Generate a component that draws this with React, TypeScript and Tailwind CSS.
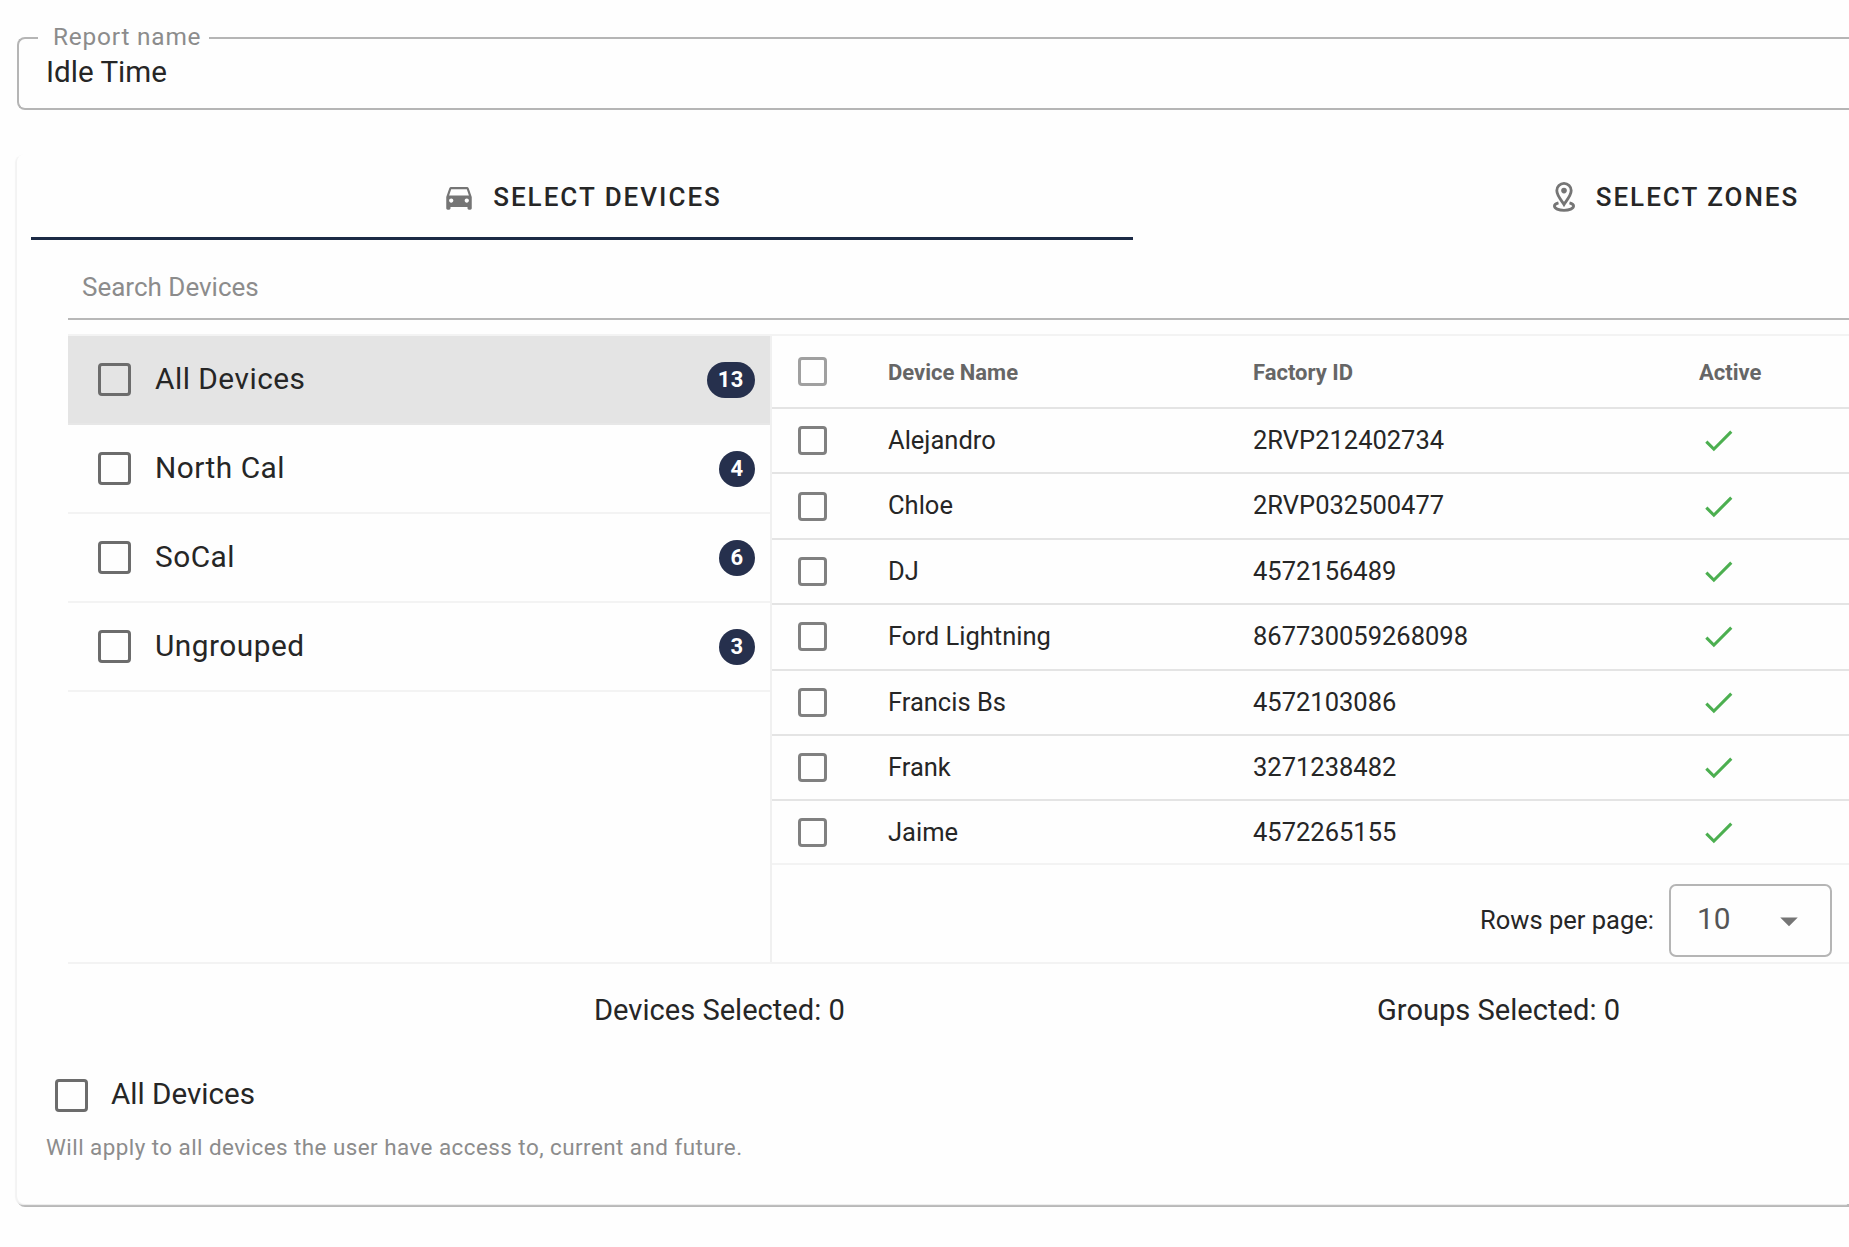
import { MdArrowDropDown, MdCheck, MdDirectionsCar } from 'react-icons/md'
import clsx from 'clsx'

const groups = [
  { name: 'All Devices', count: 13 },
  { name: 'North Cal', count: 4 },
  { name: 'SoCal', count: 6 },
  { name: 'Ungrouped', count: 3 },
]

const devices = [
  { name: 'Alejandro', factoryId: '2RVP212402734' },
  { name: 'Chloe', factoryId: '2RVP032500477' },
  { name: 'DJ', factoryId: '4572156489' },
  { name: 'Ford Lightning', factoryId: '867730059268098' },
  { name: 'Francis Bs', factoryId: '4572103086' },
  { name: 'Frank', factoryId: '3271238482' },
  { name: 'Jaime', factoryId: '4572265155' },
]

const Checkbox = ({ className }: { className: string }) => (
  <span className={clsx('block shrink-0 rounded-[4px] border-3', className)} />
)

const ZoneIcon = () => (
  <svg width="22" height="30" viewBox="0 0 22 30" fill="none" stroke="#757575" strokeWidth="2.8">
    <path d="M11 22.5C8.5 18.5 3.8 13.6 3.8 8.6a7.2 7.2 0 0 1 14.4 0c0 5-4.7 9.9-7.2 13.9z" />
    <circle cx="11" cy="8.6" r="2.8" fill="#757575" stroke="none" />
    <path d="M5.5 20.8C2.8 21.5 1.4 22.7 1.4 24.1c0 2.4 4.3 4.2 9.6 4.2s9.6-1.8 9.6-4.2c0-1.4-1.4-2.6-4.1-3.3" />
  </svg>
)

const ReportNameField = () => (
  <fieldset className="ml-[17px] h-[82px] rounded-l-[8px] border-2 border-r-0 border-[#b5b5b5] pl-[19px]">
    <legend className="h-[20px] pl-[15px] pr-[8px] text-[24.4px] leading-[18px] tracking-[0.8px] text-[#8c8c8c]">
      Report name
    </legend>
    <div className="pl-[8px] pt-[6px] text-[29.6px] leading-[36px]">Idle Time</div>
  </fieldset>
)

const Tabs = () => (
  <div className="ml-[14px] flex h-[86px] text-[26px] font-medium tracking-[2px]">
    <div className="flex w-[1102px] shrink-0 items-center justify-center gap-[17px] border-b-3 border-[#1c2a45] pt-[3px]">
      <MdDirectionsCar size={34} color="#757575" className="mb-px" />
      SELECT DEVICES
    </div>
    <div className="flex w-[1086px] shrink-0 items-center justify-center gap-[21px] border-b-3 border-transparent pt-[3px]">
      <ZoneIcon />
      SELECT ZONES
    </div>
  </div>
)

const GroupList = () => (
  <div className="w-[704px] shrink-0 border-r-2 border-[#f0f0f0]">
    {groups.map((group, i) => (
      <div
        key={group.name}
        className={clsx(
          'flex h-[89px] items-center border-b-2 pl-[30px] pr-[15px]',
          i === 0 ? 'border-[#e7e7e7] bg-[#e4e4e4]' : 'border-[#f3f3f3]',
        )}
      >
        <Checkbox className="size-[33px] border-[#6c6c6c]" />
        <span className="ml-[24px] flex-1 pb-[2px] text-[29.8px] leading-[36px] tracking-[0.5px]">
          {group.name}
        </span>
        <span className="flex h-9 min-w-9 items-center justify-center rounded-full bg-[#26304d] px-[11px] text-[22px] font-bold tracking-[0.5px] text-white">
          {group.count}
        </span>
      </div>
    ))}
  </div>
)

const DeviceTable = () => (
  <div>
    <div className="flex h-[73px] items-center border-b-2 border-[#e4e4e4] text-[22px] font-bold text-[#666]">
      <Checkbox className="ml-[26px] size-[29px] border-[#a0a0a0]" />
      <span className="ml-[61px] w-[365px] pt-px">Device Name</span>
      <span className="w-[446px] pt-px">Factory ID</span>
      <span className="pt-px">Active</span>
    </div>
    {devices.map((device) => (
      <div
        key={device.name}
        className="flex h-[65.4px] items-center border-b-2 border-[#e4e4e4] text-[25.5px] last:h-[64px] last:border-[#f3f3f3]"
      >
        <Checkbox className="ml-[26px] size-[29px] border-[#808080]" />
        <span className="ml-[61px] w-[365px] pb-px">{device.name}</span>
        <span className="w-[447px] pb-px">{device.factoryId}</span>
        <MdCheck size={37} color="#4caf50" />
      </div>
    ))}
  </div>
)

const Pagination = () => (
  <div className="flex flex-1 items-center justify-end pr-[17px] pt-[14px]">
    <span className="pb-[2px] text-[25.5px]">Rows per page:</span>
    <div className="ml-[15px] flex h-[73px] w-[163px] items-center justify-between rounded-[7px] border-2 border-[#b5b5b5] pl-[26px] pr-[20px] text-[29.8px] text-[#555]">
      <span className="pb-[2px]">10</span>
      <MdArrowDropDown size={42} color="#757575" />
    </div>
  </div>
)

const App = () => {
  return (
    <div className="h-[1247px] w-full overflow-hidden bg-[#fefefe] pt-[28px] font-['Roboto',sans-serif] text-[#262626]">
      <ReportNameField />
      <div className="ml-[17px] mt-[44px] h-[1050px] rounded-l-[8px] bg-[#fefefe] shadow-[-2px_1px_1px_#f3f3f3,0_3px_0_#b8b8b8]">
        <Tabs />
        <div className="ml-[51px]">
          <div className="flex h-[80px] items-center border-b-2 border-[#b8b8b8] pl-[14px] pt-[16px] text-[26px] text-[#8c8c8c]">
            Search Devices
          </div>
          <div className="mt-[14px] flex h-[630px] border-b-2 border-t-2 border-[#f3f3f3]">
            <GroupList />
            <div className="flex flex-1 flex-col">
              <DeviceTable />
              <Pagination />
            </div>
          </div>
          <div className="flex h-[92px] pt-[27px] text-[29.1px] leading-[39px]">
            <span className="ml-[526px] w-[783px]">Devices Selected: 0</span>
            <span>Groups Selected: 0</span>
          </div>
        </div>
        <div className="ml-[38px] mt-[23px] flex h-[33px] items-center text-[29.6px] leading-[33px]">
          <Checkbox className="size-[33px] border-[#6c6c6c]" />
          <span className="ml-[23px] pb-[3px]">All Devices</span>
        </div>
        <p className="ml-[29px] mt-[19px] text-[22.4px] tracking-[0.46px] text-[#8c8c8c]">
          Will apply to all devices the user have access to, current and future.
        </p>
      </div>
    </div>
  )
}

export default App
